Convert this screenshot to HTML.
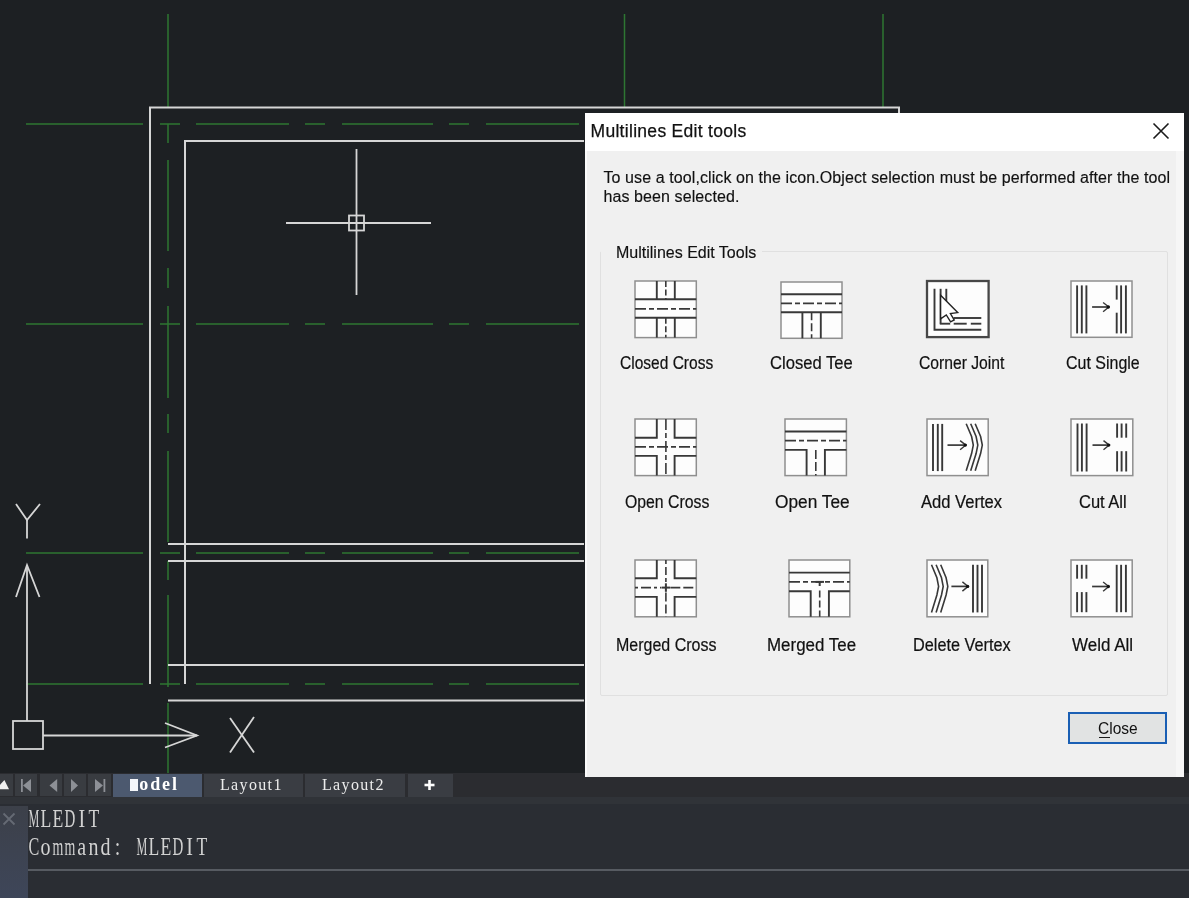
<!DOCTYPE html>
<html><head><meta charset="utf-8">
<style>
html,body{margin:0;padding:0;width:1189px;height:898px;overflow:hidden;background:#1d2023;}
*{box-sizing:border-box;}
.abs{position:absolute;}
#wrap{position:absolute;left:0;top:0;width:1189px;height:898px;filter:blur(0.45px);}
</style></head><body><div id="wrap">
<svg width="1189" height="773" style="position:absolute;left:0;top:0"><line x1="26" y1="124" x2="143" y2="124" stroke="#2e7632" stroke-width="1.5"/><line x1="160" y1="124" x2="180" y2="124" stroke="#2e7632" stroke-width="1.5"/><line x1="196" y1="124" x2="289" y2="124" stroke="#2e7632" stroke-width="1.5"/><line x1="305" y1="124" x2="325" y2="124" stroke="#2e7632" stroke-width="1.5"/><line x1="342" y1="124" x2="433" y2="124" stroke="#2e7632" stroke-width="1.5"/><line x1="449" y1="124" x2="469" y2="124" stroke="#2e7632" stroke-width="1.5"/><line x1="486" y1="124" x2="579" y2="124" stroke="#2e7632" stroke-width="1.5"/><line x1="26" y1="324" x2="143" y2="324" stroke="#2e7632" stroke-width="1.5"/><line x1="160" y1="324" x2="180" y2="324" stroke="#2e7632" stroke-width="1.5"/><line x1="196" y1="324" x2="289" y2="324" stroke="#2e7632" stroke-width="1.5"/><line x1="305" y1="324" x2="325" y2="324" stroke="#2e7632" stroke-width="1.5"/><line x1="342" y1="324" x2="433" y2="324" stroke="#2e7632" stroke-width="1.5"/><line x1="449" y1="324" x2="469" y2="324" stroke="#2e7632" stroke-width="1.5"/><line x1="486" y1="324" x2="579" y2="324" stroke="#2e7632" stroke-width="1.5"/><line x1="26" y1="553" x2="143" y2="553" stroke="#2e7632" stroke-width="1.5"/><line x1="160" y1="553" x2="180" y2="553" stroke="#2e7632" stroke-width="1.5"/><line x1="196" y1="553" x2="289" y2="553" stroke="#2e7632" stroke-width="1.5"/><line x1="305" y1="553" x2="325" y2="553" stroke="#2e7632" stroke-width="1.5"/><line x1="342" y1="553" x2="433" y2="553" stroke="#2e7632" stroke-width="1.5"/><line x1="449" y1="553" x2="469" y2="553" stroke="#2e7632" stroke-width="1.5"/><line x1="486" y1="553" x2="579" y2="553" stroke="#2e7632" stroke-width="1.5"/><line x1="26" y1="684" x2="143" y2="684" stroke="#2e7632" stroke-width="1.5"/><line x1="160" y1="684" x2="180" y2="684" stroke="#2e7632" stroke-width="1.5"/><line x1="196" y1="684" x2="289" y2="684" stroke="#2e7632" stroke-width="1.5"/><line x1="305" y1="684" x2="325" y2="684" stroke="#2e7632" stroke-width="1.5"/><line x1="342" y1="684" x2="433" y2="684" stroke="#2e7632" stroke-width="1.5"/><line x1="449" y1="684" x2="469" y2="684" stroke="#2e7632" stroke-width="1.5"/><line x1="486" y1="684" x2="579" y2="684" stroke="#2e7632" stroke-width="1.5"/><line x1="168" y1="14" x2="168" y2="107" stroke="#2e7632" stroke-width="1.5"/><line x1="168" y1="124" x2="168" y2="143" stroke="#2e7632" stroke-width="1.5"/><line x1="168" y1="160" x2="168" y2="251" stroke="#2e7632" stroke-width="1.5"/><line x1="168" y1="268" x2="168" y2="288" stroke="#2e7632" stroke-width="1.5"/><line x1="168" y1="306" x2="168" y2="398" stroke="#2e7632" stroke-width="1.5"/><line x1="168" y1="414" x2="168" y2="433" stroke="#2e7632" stroke-width="1.5"/><line x1="168" y1="451" x2="168" y2="542" stroke="#2e7632" stroke-width="1.5"/><line x1="168" y1="561" x2="168" y2="580" stroke="#2e7632" stroke-width="1.5"/><line x1="168" y1="595" x2="168" y2="687" stroke="#2e7632" stroke-width="1.5"/><line x1="168" y1="703" x2="168" y2="773" stroke="#2e7632" stroke-width="1.5"/><line x1="624.5" y1="14" x2="624.5" y2="107" stroke="#2e7632" stroke-width="1.5"/><line x1="883" y1="14" x2="883" y2="107" stroke="#2e7632" stroke-width="1.5"/><polyline points="150,684 150,107.5 899,107.5 899,113" fill="none" stroke="#d6d6d6" stroke-width="2"/><polyline points="185,684 185,141 584,141" fill="none" stroke="#d6d6d6" stroke-width="2"/><line x1="168" y1="544" x2="584" y2="544" stroke="#d6d6d6" stroke-width="2"/><line x1="168" y1="561" x2="584" y2="561" stroke="#d6d6d6" stroke-width="2"/><line x1="168" y1="665" x2="584" y2="665" stroke="#d6d6d6" stroke-width="2"/><line x1="168" y1="700.5" x2="584" y2="700.5" stroke="#d6d6d6" stroke-width="2"/><line x1="356.5" y1="149" x2="356.5" y2="295" stroke="#d6d6d6" stroke-width="1.8"/><line x1="286" y1="223" x2="431" y2="223" stroke="#d6d6d6" stroke-width="1.8"/><rect x="349" y="215.5" width="15" height="15" fill="none" stroke="#d6d6d6" stroke-width="1.8"/><line x1="27" y1="565" x2="27" y2="721" stroke="#d6d6d6" stroke-width="1.8"/><polyline points="16,597 27,565 39.5,597" fill="none" stroke="#d6d6d6" stroke-width="1.8"/><polyline points="16,504 27,520 40,504" fill="none" stroke="#d6d6d6" stroke-width="1.8"/><line x1="27" y1="520" x2="27" y2="538.5" stroke="#d6d6d6" stroke-width="1.8"/><rect x="13" y="721" width="30" height="28" fill="none" stroke="#d6d6d6" stroke-width="1.8"/><line x1="43" y1="735.5" x2="197" y2="735.5" stroke="#d6d6d6" stroke-width="1.8"/><polyline points="165,723 197,735.5 165,747.5" fill="none" stroke="#d6d6d6" stroke-width="1.8"/><line x1="230" y1="718" x2="254" y2="752.5" stroke="#d6d6d6" stroke-width="1.8"/><line x1="254" y1="717" x2="230" y2="752.5" stroke="#d6d6d6" stroke-width="1.8"/></svg>
<div class="abs" style="left:0;top:773px;width:1189px;height:24px;background:#2b2c30"></div><div class="abs" style="left:0px;top:774px;width:13px;height:21.5px;background:#393c41"></div><div class="abs" style="left:15px;top:774px;width:22px;height:21.5px;background:#393c41"></div><div class="abs" style="left:39.5px;top:774px;width:22.5px;height:21.5px;background:#393c41"></div><div class="abs" style="left:63.5px;top:774px;width:22.5px;height:21.5px;background:#393c41"></div><div class="abs" style="left:88px;top:774px;width:23px;height:21.5px;background:#393c41"></div><svg class="abs" style="left:0;top:773px" width="120" height="24"><polygon points="-4,16.3 4.4,7 9,16.3" fill="#f0f0f0"/><rect x="21" y="6" width="1.8" height="13" fill="#8d9096"/><polygon points="31,6 23,12.5 31,19" fill="#8d9096"/><polygon points="57.2,6 49.5,12.5 57.2,19" fill="#8d9096"/><polygon points="71,6 78,12.5 71,19" fill="#8d9096"/><polygon points="95,6 103,12.5 95,19" fill="#8d9096"/><rect x="103.5" y="6" width="1.8" height="13" fill="#8d9096"/></svg><div class="abs" style="left:113px;top:774px;width:88.5px;height:22.5px;background:#4c596f"></div><div class="abs" style="left:204px;top:774px;width:99px;height:22.5px;background:#3a3d43"></div><div class="abs" style="left:305px;top:774px;width:100px;height:22.5px;background:#3a3d43"></div><div class="abs" style="left:407.5px;top:774px;width:45.5px;height:22.5px;background:#3a3d43"></div><div class="abs" style="left:130px;top:778.5px;width:8px;height:12px;background:#f4f6fa"></div><div class="abs" style="left:139.3px;top:775.46px;font-family:'Liberation Serif';font-size:18px;line-height:18px;white-space:nowrap;color:#ffffff;letter-spacing:1.9px;font-weight:bold;">odel</div><div class="abs" style="left:220px;top:776.92px;font-family:'Liberation Serif';font-size:16px;line-height:16px;white-space:nowrap;color:#ececec;letter-spacing:1.35px;">Layout1</div><div class="abs" style="left:322px;top:776.92px;font-family:'Liberation Serif';font-size:16px;line-height:16px;white-space:nowrap;color:#ececec;letter-spacing:1.35px;">Layout2</div><svg class="abs" style="left:424px;top:779px" width="12" height="12"><rect x="4.2" y="1" width="2.6" height="10" fill="#fff"/><rect x="0.5" y="4.7" width="10" height="2.6" fill="#fff"/></svg>
<div class="abs" style="left:0;top:796.5px;width:1189px;height:8px;background:#303338"></div><div class="abs" style="left:0;top:804px;width:1189px;height:94px;background:#2a2d33"></div><div class="abs" style="left:0;top:806px;width:27.5px;height:92px;background:linear-gradient(#3c4049,#3e4659)"></div><svg class="abs" style="left:2px;top:812px" width="14" height="14"><path d="M1.5,1.5 L12.5,12.5 M12.5,1.5 L1.5,12.5" stroke="#656a74" stroke-width="1.8"/></svg><div class="abs" style="left:13.80px;top:810.30px;width:40px;text-align:center;font-family:'Liberation Serif';font-size:20px;line-height:20px;color:#d2d2d2;transform:scale(0.607,1.27);transform-origin:20px 16.599999999999998px">M</div><div class="abs" style="left:25.80px;top:810.30px;width:40px;text-align:center;font-family:'Liberation Serif';font-size:20px;line-height:20px;color:#d2d2d2;transform:scale(0.884,1.27);transform-origin:20px 16.599999999999998px">L</div><div class="abs" style="left:37.80px;top:810.30px;width:40px;text-align:center;font-family:'Liberation Serif';font-size:20px;line-height:20px;color:#d2d2d2;transform:scale(0.884,1.27);transform-origin:20px 16.599999999999998px">E</div><div class="abs" style="left:49.80px;top:810.30px;width:40px;text-align:center;font-family:'Liberation Serif';font-size:20px;line-height:20px;color:#d2d2d2;transform:scale(0.747,1.27);transform-origin:20px 16.599999999999998px">D</div><div class="abs" style="left:61.80px;top:810.30px;width:40px;text-align:center;font-family:'Liberation Serif';font-size:20px;line-height:20px;color:#d2d2d2;transform:scale(1.000,1.27);transform-origin:20px 16.599999999999998px">I</div><div class="abs" style="left:73.80px;top:810.30px;width:40px;text-align:center;font-family:'Liberation Serif';font-size:20px;line-height:20px;color:#d2d2d2;transform:scale(0.884,1.27);transform-origin:20px 16.599999999999998px">T</div><div class="abs" style="left:13.60px;top:837.70px;width:40px;text-align:center;font-family:'Liberation Serif';font-size:20px;line-height:20px;color:#d2d2d2;transform:scale(0.809,1.27);transform-origin:20px 16.599999999999998px">C</div><div class="abs" style="left:25.60px;top:837.70px;width:40px;text-align:center;font-family:'Liberation Serif';font-size:20px;line-height:20px;color:#d2d2d2;transform:scale(1.000,1.27);transform-origin:20px 16.599999999999998px">o</div><div class="abs" style="left:37.60px;top:837.70px;width:40px;text-align:center;font-family:'Liberation Serif';font-size:20px;line-height:20px;color:#d2d2d2;transform:scale(0.694,1.27);transform-origin:20px 16.599999999999998px">m</div><div class="abs" style="left:49.60px;top:837.70px;width:40px;text-align:center;font-family:'Liberation Serif';font-size:20px;line-height:20px;color:#d2d2d2;transform:scale(0.694,1.27);transform-origin:20px 16.599999999999998px">m</div><div class="abs" style="left:61.60px;top:837.70px;width:40px;text-align:center;font-family:'Liberation Serif';font-size:20px;line-height:20px;color:#d2d2d2;transform:scale(1.000,1.27);transform-origin:20px 16.599999999999998px">a</div><div class="abs" style="left:73.60px;top:837.70px;width:40px;text-align:center;font-family:'Liberation Serif';font-size:20px;line-height:20px;color:#d2d2d2;transform:scale(1.000,1.27);transform-origin:20px 16.599999999999998px">n</div><div class="abs" style="left:85.60px;top:837.70px;width:40px;text-align:center;font-family:'Liberation Serif';font-size:20px;line-height:20px;color:#d2d2d2;transform:scale(1.000,1.27);transform-origin:20px 16.599999999999998px">d</div><div class="abs" style="left:97.60px;top:837.70px;width:40px;text-align:center;font-family:'Liberation Serif';font-size:20px;line-height:20px;color:#d2d2d2;transform:scale(1.000,1.27);transform-origin:20px 16.599999999999998px">:</div><div class="abs" style="left:121.60px;top:837.70px;width:40px;text-align:center;font-family:'Liberation Serif';font-size:20px;line-height:20px;color:#d2d2d2;transform:scale(0.607,1.27);transform-origin:20px 16.599999999999998px">M</div><div class="abs" style="left:133.60px;top:837.70px;width:40px;text-align:center;font-family:'Liberation Serif';font-size:20px;line-height:20px;color:#d2d2d2;transform:scale(0.884,1.27);transform-origin:20px 16.599999999999998px">L</div><div class="abs" style="left:145.60px;top:837.70px;width:40px;text-align:center;font-family:'Liberation Serif';font-size:20px;line-height:20px;color:#d2d2d2;transform:scale(0.884,1.27);transform-origin:20px 16.599999999999998px">E</div><div class="abs" style="left:157.60px;top:837.70px;width:40px;text-align:center;font-family:'Liberation Serif';font-size:20px;line-height:20px;color:#d2d2d2;transform:scale(0.747,1.27);transform-origin:20px 16.599999999999998px">D</div><div class="abs" style="left:169.60px;top:837.70px;width:40px;text-align:center;font-family:'Liberation Serif';font-size:20px;line-height:20px;color:#d2d2d2;transform:scale(1.000,1.27);transform-origin:20px 16.599999999999998px">I</div><div class="abs" style="left:181.60px;top:837.70px;width:40px;text-align:center;font-family:'Liberation Serif';font-size:20px;line-height:20px;color:#d2d2d2;transform:scale(0.884,1.27);transform-origin:20px 16.599999999999998px">T</div><div class="abs" style="left:28px;top:869px;width:1161px;height:2px;background:#575b62"></div>
<div class="abs" style="left:585px;top:113px;width:599px;height:664px;background:#f0f0f0"></div><div class="abs" style="left:1176px;top:151px;width:8px;height:626px;background:#f6f6f6"></div><div class="abs" style="left:585px;top:151px;width:2px;height:626px;background:#fbfbfb"></div><div class="abs" style="left:585px;top:113px;width:599px;height:38px;background:#ffffff"></div><div class="abs" style="left:590.5px;top:122.72px;font-family:'Liberation Sans';font-size:17.5px;line-height:17.5px;white-space:nowrap;color:#111;letter-spacing:0.3px;-webkit-text-stroke:0.25px #111;">Multilines Edit tools</div><svg class="abs" style="left:1152px;top:122px" width="18" height="18"><path d="M1.5,1.5 L16.5,16.5 M16.5,1.5 L1.5,16.5" stroke="#1a1a1a" stroke-width="1.6"/></svg><div class="abs" style="left:603.5px;top:169.50px;font-family:'Liberation Sans';font-size:16px;line-height:16px;white-space:nowrap;color:#111;letter-spacing:0.09px;-webkit-text-stroke:0.15px #111;">To use a tool,click on the icon.Object selection must be performed after the tool</div><div class="abs" style="left:603.5px;top:189.10px;font-family:'Liberation Sans';font-size:16px;line-height:16px;white-space:nowrap;color:#111;letter-spacing:0.09px;-webkit-text-stroke:0.15px #111;">has been selected.</div><div class="abs" style="left:600px;top:251px;width:568px;height:444.5px;border:1px solid #e0e0e0;border-radius:2px"></div><div class="abs" style="left:601px;top:240px;width:161px;height:20px;background:#f0f0f0"></div><div class="abs" style="left:616px;top:245.00px;font-family:'Liberation Sans';font-size:16px;line-height:16px;white-space:nowrap;color:#111;-webkit-text-stroke:0.15px #111;">Multilines Edit Tools</div><div class="abs" style="left:1067.5px;top:711.5px;width:99px;height:32px;border:2.5px solid #1a5fb4;background:#e1e3e3"></div><div class="abs" style="left:1098.3px;top:719.85px;font-family:'Liberation Sans';font-size:17px;line-height:17px;white-space:nowrap;color:#111;transform:scale(0.913,1.0);transform-origin:0 14.45px;">Close</div><div class="abs" style="left:1099px;top:736.5px;width:11px;height:1px;background:#1a1a1a"></div>
<svg class="abs" style="left:632.2px;top:278.3px" width="67.29999999999995" height="62.599999999999966"><g transform="translate(3,3)"><rect x="0" y="0" width="61.299999999999955" height="56.599999999999966" fill="#fdfdfd" stroke="#8f8f8f" stroke-width="1.5"/><line x1="0" y1="18.3" x2="61.3" y2="18.3" stroke="#383838" stroke-width="1.9"/><line x1="0" y1="36.7" x2="61.3" y2="36.7" stroke="#383838" stroke-width="1.9"/><line x1="0" y1="27.9" x2="61.3" y2="27.9" stroke="#383838" stroke-width="1.6" stroke-dasharray="11 3 5 3"/><line x1="21.8" y1="0" x2="21.8" y2="18.3" stroke="#383838" stroke-width="1.9"/><line x1="21.8" y1="36.7" x2="21.8" y2="56.6" stroke="#383838" stroke-width="1.9"/><line x1="39.8" y1="0" x2="39.8" y2="18.3" stroke="#383838" stroke-width="1.9"/><line x1="39.8" y1="36.7" x2="39.8" y2="56.6" stroke="#383838" stroke-width="1.9"/><line x1="30.8" y1="0" x2="30.8" y2="18.3" stroke="#383838" stroke-width="1.6" stroke-dasharray="6 2.5"/><line x1="30.8" y1="36.7" x2="30.8" y2="56.6" stroke="#383838" stroke-width="1.6" stroke-dasharray="6 2.5"/></g></svg><svg class="abs" style="left:778px;top:278.6px" width="67" height="62.299999999999955"><g transform="translate(3,3)"><rect x="0" y="0" width="61" height="56.299999999999955" fill="#fdfdfd" stroke="#8f8f8f" stroke-width="1.5"/><line x1="0" y1="12.2" x2="61" y2="12.2" stroke="#383838" stroke-width="1.9"/><line x1="0" y1="30.2" x2="61" y2="30.2" stroke="#383838" stroke-width="1.9"/><line x1="0" y1="21.4" x2="61" y2="21.4" stroke="#383838" stroke-width="1.6" stroke-dasharray="11 3 5 3"/><line x1="21.4" y1="30.2" x2="21.4" y2="56.3" stroke="#383838" stroke-width="1.9"/><line x1="39.8" y1="30.2" x2="39.8" y2="56.3" stroke="#383838" stroke-width="1.9"/><line x1="30.6" y1="30.2" x2="30.6" y2="56.3" stroke="#383838" stroke-width="1.6" stroke-dasharray="8 3"/></g></svg><svg class="abs" style="left:924px;top:278.3px" width="67.60000000000002" height="62.099999999999966"><g transform="translate(3,3)"><rect x="0" y="0" width="61.60000000000002" height="56.099999999999966" fill="#fdfdfd" stroke="#474747" stroke-width="2.3"/><polyline points="7.50,7.80 7.50,48.80 54.30,48.80" fill="none" stroke="#383838" stroke-width="1.9" stroke-linejoin="miter"/><line x1="13.6" y1="7.8" x2="13.6" y2="42.7" stroke="#383838" stroke-width="1.9"/><line x1="12.8" y1="42.7" x2="23.2" y2="42.7" stroke="#383838" stroke-width="1.9"/><line x1="26.7" y1="42.7" x2="39.7" y2="42.7" stroke="#383838" stroke-width="1.9"/><line x1="43.8" y1="42.7" x2="54.3" y2="42.7" stroke="#383838" stroke-width="1.9"/><line x1="19.3" y1="7.8" x2="19.3" y2="20" stroke="#383838" stroke-width="1.9"/><line x1="26.5" y1="37" x2="54.3" y2="37" stroke="#383838" stroke-width="1.9"/><polygon points="13.60,14.30 13.60,37.90 19.30,34.00 23.60,40.80 27.20,39.00 23.40,32.60 30.70,31.60" fill="#fff" stroke="#222" stroke-width="1.4" stroke-linejoin="miter"/></g></svg><svg class="abs" style="left:1068px;top:278.4px" width="67" height="62.30000000000001"><g transform="translate(3,3)"><rect x="0" y="0" width="61" height="56.30000000000001" fill="#fdfdfd" stroke="#8f8f8f" stroke-width="1.5"/><line x1="6.1" y1="4.4" x2="6.1" y2="52.4" stroke="#383838" stroke-width="1.9"/><line x1="10.8" y1="4.4" x2="10.8" y2="52.4" stroke="#383838" stroke-width="1.9"/><line x1="15.4" y1="4.4" x2="15.4" y2="52.4" stroke="#383838" stroke-width="1.9"/><line x1="50.1" y1="4.4" x2="50.1" y2="52.4" stroke="#383838" stroke-width="1.9"/><line x1="54.9" y1="4.4" x2="54.9" y2="52.4" stroke="#383838" stroke-width="1.9"/><line x1="45.7" y1="4.4" x2="45.7" y2="18.6" stroke="#383838" stroke-width="1.9"/><line x1="45.7" y1="31.7" x2="45.7" y2="52.4" stroke="#383838" stroke-width="1.9"/><line x1="21.1" y1="26" x2="37.8" y2="26" stroke="#383838" stroke-width="1.7"/><polyline points="32.10,21.50 37.80,26.00 32.10,30.70" fill="none" stroke="#383838" stroke-width="1.4" stroke-linejoin="miter"/><circle cx="37.3" cy="26" r="1.7" fill="#111"/></g></svg><svg class="abs" style="left:632.2px;top:416.3px" width="67.29999999999995" height="62.599999999999966"><g transform="translate(3,3)"><rect x="0" y="0" width="61.299999999999955" height="56.599999999999966" fill="#fdfdfd" stroke="#8f8f8f" stroke-width="1.5"/><polyline points="0.00,18.80 21.80,18.80 21.80,0.00" fill="none" stroke="#383838" stroke-width="1.9" stroke-linejoin="miter"/><polyline points="39.60,0.00 39.60,18.80 61.30,18.80" fill="none" stroke="#383838" stroke-width="1.9" stroke-linejoin="miter"/><polyline points="0.00,36.90 21.80,36.90 21.80,56.60" fill="none" stroke="#383838" stroke-width="1.9" stroke-linejoin="miter"/><polyline points="39.60,56.60 39.60,36.90 61.30,36.90" fill="none" stroke="#383838" stroke-width="1.9" stroke-linejoin="miter"/><line x1="0" y1="27.9" x2="61.3" y2="27.9" stroke="#383838" stroke-width="1.6" stroke-dasharray="11 3 5 3"/><line x1="30.9" y1="0" x2="30.9" y2="56.6" stroke="#383838" stroke-width="1.6" stroke-dasharray="11 3 5 3"/></g></svg><svg class="abs" style="left:782.4px;top:416.3px" width="67.39999999999998" height="62.599999999999966"><g transform="translate(3,3)"><rect x="0" y="0" width="61.39999999999998" height="56.599999999999966" fill="#fdfdfd" stroke="#8f8f8f" stroke-width="1.5"/><line x1="0" y1="12.5" x2="61.4" y2="12.5" stroke="#383838" stroke-width="1.9"/><line x1="0" y1="21.6" x2="61.4" y2="21.6" stroke="#383838" stroke-width="1.6" stroke-dasharray="11 3 5 3"/><polyline points="0.00,30.90 21.60,30.90 21.60,56.60" fill="none" stroke="#383838" stroke-width="1.9" stroke-linejoin="miter"/><polyline points="39.90,56.60 39.90,30.90 61.40,30.90" fill="none" stroke="#383838" stroke-width="1.9" stroke-linejoin="miter"/><line x1="30.8" y1="30.9" x2="30.8" y2="56.6" stroke="#383838" stroke-width="1.6" stroke-dasharray="9 3"/></g></svg><svg class="abs" style="left:924px;top:416.3px" width="67.20000000000005" height="62.599999999999966"><g transform="translate(3,3)"><rect x="0" y="0" width="61.200000000000045" height="56.599999999999966" fill="#fdfdfd" stroke="#8f8f8f" stroke-width="1.5"/><line x1="6" y1="4.9" x2="6" y2="52.1" stroke="#383838" stroke-width="1.9"/><line x1="10.8" y1="4.9" x2="10.8" y2="52.1" stroke="#383838" stroke-width="1.9"/><line x1="15.2" y1="4.9" x2="15.2" y2="52.1" stroke="#383838" stroke-width="1.9"/><polyline points="39.20,4.70 44.60,17.50 46.30,26.10 44.60,34.60 39.20,51.80" fill="none" stroke="#383838" stroke-width="1.6" stroke-linejoin="miter"/><polyline points="43.70,4.70 49.10,17.50 50.80,26.10 49.10,34.60 43.70,51.80" fill="none" stroke="#383838" stroke-width="1.6" stroke-linejoin="miter"/><polyline points="48.20,4.70 53.60,17.50 55.30,26.10 53.60,34.60 48.20,51.80" fill="none" stroke="#383838" stroke-width="1.6" stroke-linejoin="miter"/><line x1="20.5" y1="26.1" x2="38.8" y2="26.1" stroke="#383838" stroke-width="1.7"/><polyline points="33.10,21.60 38.80,26.10 33.10,30.80" fill="none" stroke="#383838" stroke-width="1.4" stroke-linejoin="miter"/><circle cx="38.3" cy="26.1" r="1.7" fill="#111"/></g></svg><svg class="abs" style="left:1067.6px;top:416.3px" width="67.80000000000018" height="62.599999999999966"><g transform="translate(3,3)"><rect x="0" y="0" width="61.80000000000018" height="56.599999999999966" fill="#fdfdfd" stroke="#8f8f8f" stroke-width="1.5"/><line x1="6.5" y1="4.5" x2="6.5" y2="52.5" stroke="#383838" stroke-width="1.9"/><line x1="10.9" y1="4.5" x2="10.9" y2="52.5" stroke="#383838" stroke-width="1.9"/><line x1="15.6" y1="4.5" x2="15.6" y2="52.5" stroke="#383838" stroke-width="1.9"/><line x1="46.1" y1="4.5" x2="46.1" y2="18.7" stroke="#383838" stroke-width="1.9"/><line x1="46.1" y1="32.2" x2="46.1" y2="52.5" stroke="#383838" stroke-width="1.9"/><line x1="50.6" y1="4.5" x2="50.6" y2="18.7" stroke="#383838" stroke-width="1.9"/><line x1="50.6" y1="32.2" x2="50.6" y2="52.5" stroke="#383838" stroke-width="1.9"/><line x1="55.2" y1="4.5" x2="55.2" y2="18.7" stroke="#383838" stroke-width="1.9"/><line x1="55.2" y1="32.2" x2="55.2" y2="52.5" stroke="#383838" stroke-width="1.9"/><line x1="21.5" y1="26.1" x2="38.2" y2="26.1" stroke="#383838" stroke-width="1.7"/><polyline points="32.50,21.60 38.20,26.10 32.50,30.80" fill="none" stroke="#383838" stroke-width="1.4" stroke-linejoin="miter"/><circle cx="37.7" cy="26.1" r="1.7" fill="#111"/></g></svg><svg class="abs" style="left:632.2px;top:557.2px" width="67.29999999999995" height="62.799999999999955"><g transform="translate(3,3)"><rect x="0" y="0" width="61.299999999999955" height="56.799999999999955" fill="#fdfdfd" stroke="#8f8f8f" stroke-width="1.5"/><polyline points="0.00,18.30 21.80,18.30 21.80,0.00" fill="none" stroke="#383838" stroke-width="1.9" stroke-linejoin="miter"/><polyline points="39.60,0.00 39.60,18.30 61.30,18.30" fill="none" stroke="#383838" stroke-width="1.9" stroke-linejoin="miter"/><polyline points="0.00,36.90 21.80,36.90 21.80,56.80" fill="none" stroke="#383838" stroke-width="1.9" stroke-linejoin="miter"/><polyline points="39.60,56.80 39.60,36.90 61.30,36.90" fill="none" stroke="#383838" stroke-width="1.9" stroke-linejoin="miter"/><line x1="0" y1="27.6" x2="26.5" y2="27.6" stroke="#383838" stroke-width="1.6" stroke-dasharray="3 3 10 3"/><line x1="35.3" y1="27.6" x2="61.3" y2="27.6" stroke="#383838" stroke-width="1.6" stroke-dasharray="10 3"/><line x1="30.9" y1="0" x2="30.9" y2="23" stroke="#383838" stroke-width="1.6" stroke-dasharray="4 3 8 3"/><line x1="30.9" y1="32.5" x2="30.9" y2="56.8" stroke="#383838" stroke-width="1.6" stroke-dasharray="9 3"/><line x1="26.8" y1="27.6" x2="35" y2="27.6" stroke="#383838" stroke-width="2"/><line x1="30.9" y1="23.3" x2="30.9" y2="31.8" stroke="#383838" stroke-width="2"/></g></svg><svg class="abs" style="left:785.5px;top:557.2px" width="66.79999999999995" height="62.799999999999955"><g transform="translate(3,3)"><rect x="0" y="0" width="60.799999999999955" height="56.799999999999955" fill="#fdfdfd" stroke="#8f8f8f" stroke-width="1.5"/><line x1="0" y1="12.6" x2="60.8" y2="12.6" stroke="#383838" stroke-width="1.9"/><line x1="0" y1="21.9" x2="60.8" y2="21.9" stroke="#383838" stroke-width="1.6" stroke-dasharray="11 3 5 3"/><polyline points="0.00,31.30 21.70,31.30 21.70,56.80" fill="none" stroke="#383838" stroke-width="1.9" stroke-linejoin="miter"/><polyline points="39.90,56.80 39.90,31.30 60.80,31.30" fill="none" stroke="#383838" stroke-width="1.9" stroke-linejoin="miter"/><line x1="26.5" y1="21.9" x2="35" y2="21.9" stroke="#383838" stroke-width="2"/><line x1="30.7" y1="21.9" x2="30.7" y2="26" stroke="#383838" stroke-width="2"/><line x1="30.7" y1="30.5" x2="30.7" y2="56.8" stroke="#383838" stroke-width="1.6" stroke-dasharray="7 3"/></g></svg><svg class="abs" style="left:923.8px;top:557.2px" width="66.80000000000007" height="62.799999999999955"><g transform="translate(3,3)"><rect x="0" y="0" width="60.80000000000007" height="56.799999999999955" fill="#fdfdfd" stroke="#8f8f8f" stroke-width="1.5"/><polyline points="4.50,4.80 9.90,17.80 11.60,26.40 9.90,35.00 4.50,52.40" fill="none" stroke="#383838" stroke-width="1.6" stroke-linejoin="miter"/><polyline points="9.10,4.80 14.50,17.80 16.20,26.40 14.50,35.00 9.10,52.40" fill="none" stroke="#383838" stroke-width="1.6" stroke-linejoin="miter"/><polyline points="13.70,4.80 19.10,17.80 20.80,26.40 19.10,35.00 13.70,52.40" fill="none" stroke="#383838" stroke-width="1.6" stroke-linejoin="miter"/><line x1="24.4" y1="26.4" x2="41.1" y2="26.4" stroke="#383838" stroke-width="1.7"/><polyline points="35.40,21.90 41.10,26.40 35.40,31.10" fill="none" stroke="#383838" stroke-width="1.4" stroke-linejoin="miter"/><circle cx="40.6" cy="26.4" r="1.7" fill="#111"/><line x1="46" y1="4.8" x2="46" y2="52.4" stroke="#383838" stroke-width="1.9"/><line x1="50.5" y1="4.8" x2="50.5" y2="52.4" stroke="#383838" stroke-width="1.9"/><line x1="55" y1="4.8" x2="55" y2="52.4" stroke="#383838" stroke-width="1.9"/></g></svg><svg class="abs" style="left:1068px;top:557.2px" width="67.20000000000005" height="62.799999999999955"><g transform="translate(3,3)"><rect x="0" y="0" width="61.200000000000045" height="56.799999999999955" fill="#fdfdfd" stroke="#8f8f8f" stroke-width="1.5"/><line x1="6.1" y1="4.8" x2="6.1" y2="18.7" stroke="#383838" stroke-width="1.9"/><line x1="6.1" y1="32.1" x2="6.1" y2="52.2" stroke="#383838" stroke-width="1.9"/><line x1="10.8" y1="4.8" x2="10.8" y2="18.7" stroke="#383838" stroke-width="1.9"/><line x1="10.8" y1="32.1" x2="10.8" y2="52.2" stroke="#383838" stroke-width="1.9"/><line x1="15.4" y1="4.8" x2="15.4" y2="18.7" stroke="#383838" stroke-width="1.9"/><line x1="15.4" y1="32.1" x2="15.4" y2="52.2" stroke="#383838" stroke-width="1.9"/><line x1="45.7" y1="4.8" x2="45.7" y2="52.2" stroke="#383838" stroke-width="1.9"/><line x1="50.1" y1="4.8" x2="50.1" y2="52.2" stroke="#383838" stroke-width="1.9"/><line x1="54.9" y1="4.8" x2="54.9" y2="52.2" stroke="#383838" stroke-width="1.9"/><line x1="21.1" y1="26.5" x2="37.8" y2="26.5" stroke="#383838" stroke-width="1.7"/><polyline points="32.10,22.00 37.80,26.50 32.10,31.20" fill="none" stroke="#383838" stroke-width="1.4" stroke-linejoin="miter"/><circle cx="37.3" cy="26.5" r="1.7" fill="#111"/></g></svg>
<div class="abs" style="left:620.0px;top:354.62px;font-family:'Liberation Sans';font-size:17.5px;line-height:17.5px;white-space:nowrap;color:#111;transform:scale(0.887,1.0);transform-origin:0 14.875px;-webkit-text-stroke:0.2px #111;">Closed Cross</div><div class="abs" style="left:770.3px;top:354.62px;font-family:'Liberation Sans';font-size:17.5px;line-height:17.5px;white-space:nowrap;color:#111;transform:scale(0.949,1.0);transform-origin:0 14.875px;-webkit-text-stroke:0.2px #111;">Closed Tee</div><div class="abs" style="left:919.0px;top:354.62px;font-family:'Liberation Sans';font-size:17.5px;line-height:17.5px;white-space:nowrap;color:#111;transform:scale(0.896,1.0);transform-origin:0 14.875px;-webkit-text-stroke:0.2px #111;">Corner Joint</div><div class="abs" style="left:1066.1px;top:354.62px;font-family:'Liberation Sans';font-size:17.5px;line-height:17.5px;white-space:nowrap;color:#111;transform:scale(0.913,1.0);transform-origin:0 14.875px;-webkit-text-stroke:0.2px #111;">Cut Single</div><div class="abs" style="left:624.5px;top:493.52px;font-family:'Liberation Sans';font-size:17.5px;line-height:17.5px;white-space:nowrap;color:#111;transform:scale(0.903,1.0);transform-origin:0 14.875px;-webkit-text-stroke:0.2px #111;">Open Cross</div><div class="abs" style="left:774.6999999999999px;top:493.52px;font-family:'Liberation Sans';font-size:17.5px;line-height:17.5px;white-space:nowrap;color:#111;transform:scale(0.987,1.0);transform-origin:0 14.875px;-webkit-text-stroke:0.2px #111;">Open Tee</div><div class="abs" style="left:920.6999999999999px;top:493.52px;font-family:'Liberation Sans';font-size:17.5px;line-height:17.5px;white-space:nowrap;color:#111;transform:scale(0.947,1.0);transform-origin:0 14.875px;-webkit-text-stroke:0.2px #111;">Add Vertex</div><div class="abs" style="left:1079.1px;top:493.52px;font-family:'Liberation Sans';font-size:17.5px;line-height:17.5px;white-space:nowrap;color:#111;transform:scale(0.942,1.0);transform-origin:0 14.875px;-webkit-text-stroke:0.2px #111;">Cut All</div><div class="abs" style="left:616.3px;top:637.33px;font-family:'Liberation Sans';font-size:17.5px;line-height:17.5px;white-space:nowrap;color:#111;transform:scale(0.914,1.0);transform-origin:0 14.875px;-webkit-text-stroke:0.2px #111;">Merged Cross</div><div class="abs" style="left:767.0999999999999px;top:637.33px;font-family:'Liberation Sans';font-size:17.5px;line-height:17.5px;white-space:nowrap;color:#111;transform:scale(0.967,1.0);transform-origin:0 14.875px;-webkit-text-stroke:0.2px #111;">Merged Tee</div><div class="abs" style="left:913.1999999999999px;top:637.33px;font-family:'Liberation Sans';font-size:17.5px;line-height:17.5px;white-space:nowrap;color:#111;transform:scale(0.93,1.0);transform-origin:0 14.875px;-webkit-text-stroke:0.2px #111;">Delete Vertex</div><div class="abs" style="left:1071.6px;top:637.33px;font-family:'Liberation Sans';font-size:17.5px;line-height:17.5px;white-space:nowrap;color:#111;transform:scale(0.972,1.0);transform-origin:0 14.875px;-webkit-text-stroke:0.2px #111;">Weld All</div>
</div></body></html>
